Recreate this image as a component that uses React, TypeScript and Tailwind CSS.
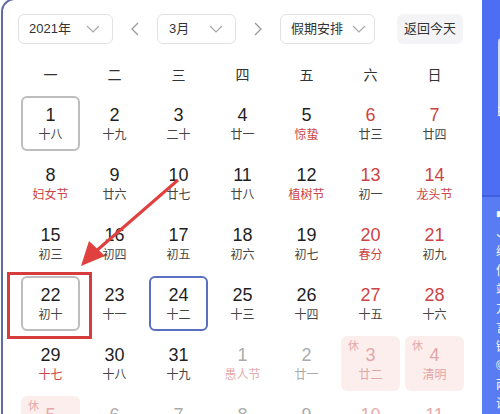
import React from "react";

type Day = {
  n: number;
  l: string;
  numRed?: boolean;
  lunRed?: boolean;
  faded?: boolean;
  rest?: boolean;
  box?: "gray" | "blue";
};

const rows: Day[][] = [
  [
    { n: 1, l: "十八", box: "gray" },
    { n: 2, l: "十九" },
    { n: 3, l: "二十" },
    { n: 4, l: "廿一" },
    { n: 5, l: "惊蛰", lunRed: true },
    { n: 6, l: "廿三", numRed: true },
    { n: 7, l: "廿四", numRed: true },
  ],
  [
    { n: 8, l: "妇女节", lunRed: true },
    { n: 9, l: "廿六" },
    { n: 10, l: "廿七" },
    { n: 11, l: "廿八" },
    { n: 12, l: "植树节", lunRed: true },
    { n: 13, l: "初一", numRed: true },
    { n: 14, l: "龙头节", numRed: true, lunRed: true },
  ],
  [
    { n: 15, l: "初三" },
    { n: 16, l: "初四" },
    { n: 17, l: "初五" },
    { n: 18, l: "初六" },
    { n: 19, l: "初七" },
    { n: 20, l: "春分", numRed: true, lunRed: true },
    { n: 21, l: "初九", numRed: true },
  ],
  [
    { n: 22, l: "初十", box: "gray" },
    { n: 23, l: "十一" },
    { n: 24, l: "十二", box: "blue" },
    { n: 25, l: "十三" },
    { n: 26, l: "十四" },
    { n: 27, l: "十五", numRed: true },
    { n: 28, l: "十六", numRed: true },
  ],
  [
    { n: 29, l: "十七", lunRed: true },
    { n: 30, l: "十八" },
    { n: 31, l: "十九" },
    { n: 1, l: "愚人节", faded: true, lunRed: true },
    { n: 2, l: "廿一", faded: true },
    { n: 3, l: "廿二", faded: true, rest: true },
    { n: 4, l: "清明", faded: true, rest: true },
  ],
  [
    { n: 5, l: "寒食", faded: true, rest: true },
    { n: 6, l: "廿五", faded: true },
    { n: 7, l: "廿六", faded: true },
    { n: 8, l: "廿七", faded: true },
    { n: 9, l: "廿八", faded: true },
    { n: 10, l: "廿九", faded: true, numRed: true },
    { n: 11, l: "三十", faded: true, numRed: true },
  ],
];

const Chevron = () => (
  <svg width="14" height="8" viewBox="0 0 14 8" fill="none">
    <path d="M1 1l6 6 6-6" stroke="#a8a8a8" strokeWidth="1.2" />
  </svg>
);

function Cell({ d }: { d: Day }) {
  let numColor = d.numRed ? "text-[#cc4444]" : "text-[#1f1f1f]";
  let lunColor = d.lunRed ? "text-[#cc4444]" : "text-[#444]";
  if (d.faded) {
    numColor = d.numRed ? "text-[#e7abab]" : "text-[#ababab]";
    lunColor = d.lunRed ? "text-[#e7abab]" : "text-[#ababab]";
  }
  if (d.rest) {
    numColor = "text-[#e3a6a6]";
    lunColor = "text-[#e3a6a6]";
  }
  const border =
    d.box === "gray"
      ? "border-2 border-[#bdbdbd]"
      : d.box === "blue"
      ? "border-2 border-[#5a6fbf]"
      : "border-2 border-transparent";
  return (
    <div
      className={`relative h-[55px] rounded-[6px] ${border} ${
        d.rest ? "bg-[#fdeeee]" : ""
      } flex flex-col items-center pt-[5px]`}
    >
      {d.rest && (
        <span className="absolute left-[5px] top-[1px] text-[11px] leading-[14px] text-[#e6a9a9]">
          休
        </span>
      )}
      <span className={`text-[18px] leading-[24px] ${numColor}`}>{d.n}</span>
      <span className={`text-[12px] leading-[16px] ${lunColor}`}>{d.l}</span>
    </div>
  );
}

export default function App() {
  return (
    <div
      className="w-[500px] h-[414px] overflow-hidden flex bg-white"
      style={{ fontFamily: '"Liberation Sans", "Noto Sans CJK SC", sans-serif' }}
    >
      <div className="relative w-[481px] h-[420px] -mt-[2px] ml-[1px] border-l-2 border-t-2 border-[#5d6ca6] rounded-tl-[14px] bg-white">
        <div className="pl-[15px] pt-[14px]">
          {/* header */}
          <div className="flex items-center h-[30px]">
            <div className="w-[95px] h-[30px] border border-[#e2e2e2] rounded-[6px] flex items-center justify-between pl-[10px] pr-[12px] text-[13px] text-[#333]">
              <span>2021年</span>
              <Chevron />
            </div>
            <div className="w-[44px] flex justify-center">
              <svg width="8" height="14" viewBox="0 0 8 14" fill="none">
                <path d="M7 1L1 7l6 6" stroke="#9a9a9a" strokeWidth="1.3" />
              </svg>
            </div>
            <div className="w-[79px] h-[30px] border border-[#e2e2e2] rounded-[6px] flex items-center justify-between pl-[11px] pr-[12px] text-[13px] text-[#333]">
              <span>3月</span>
              <Chevron />
            </div>
            <div className="w-[44px] flex justify-center">
              <svg width="8" height="14" viewBox="0 0 8 14" fill="none">
                <path d="M1 1l6 6-6 6" stroke="#9a9a9a" strokeWidth="1.3" />
              </svg>
            </div>
            <div className="w-[95px] h-[30px] border border-[#e2e2e2] rounded-[6px] flex items-center justify-between pl-[10px] pr-[8px] text-[13px] text-[#333]">
              <span>假期安排</span>
              <Chevron />
            </div>
            <div className="ml-[22px] w-[66px] h-[30px] rounded-[6px] bg-[#f4f4f6] flex items-center justify-center text-[13px] text-[#333]">
              返回今天
            </div>
          </div>
          {/* weekdays */}
          <div className="grid grid-cols-[repeat(7,59px)] gap-x-[5px] ml-[3px] mt-[19px] h-[24px] items-center text-[14px] text-[#333]">
            {["一", "二", "三", "四", "五", "六", "日"].map((w) => (
              <div key={w} className="text-center leading-[24px]">
                {w}
              </div>
            ))}
          </div>
          {/* days */}
          <div className="grid grid-cols-[repeat(7,59px)] gap-x-[5px] gap-y-[5px] ml-[3px] mt-[9px]">
            {rows.flat().map((d, i) => (
              <Cell key={i} d={d} />
            ))}
          </div>
        </div>
        {/* annotation */}
        <div className="absolute left-[4px] top-[272px] w-[85px] h-[67px] border-[3px] border-[#d63c3c]" />
        <svg className="absolute left-0 top-0" width="481" height="414" viewBox="0 0 481 414" style={{ top: 0 }}>
          <line x1="175" y1="180" x2="92" y2="252" stroke="#e0403e" strokeWidth="3" />
          <polygon points="78,266 86,241 102,256" fill="#e0403e" />
        </svg>
      </div>
      {/* right strip */}
      <div className="flex-1 h-full flex flex-col overflow-hidden">
        <div className="h-[197px] bg-[#4d6ef2] relative">
          <div className="absolute left-[16px] top-[38px] w-[10px] h-[79px] rounded-l-[4px] bg-[#d5dbfa]" />
          <div className="absolute left-[15px] top-[104px] text-[11px] text-white leading-[14px]">主</div>
        </div>
        <div className="h-[2px] bg-[#3f5fe0]" />
        <div className="flex-1 bg-[#5a7cf3] pl-[14px] pt-[8px] text-[12px] leading-[19px] text-white">
          {["■", "、", "编", "信", "站", "方", "言", "键", "©", "两", "设"].map((c, i) => (
            <div key={i}>{c}</div>
          ))}
        </div>
      </div>
    </div>
  );
}
